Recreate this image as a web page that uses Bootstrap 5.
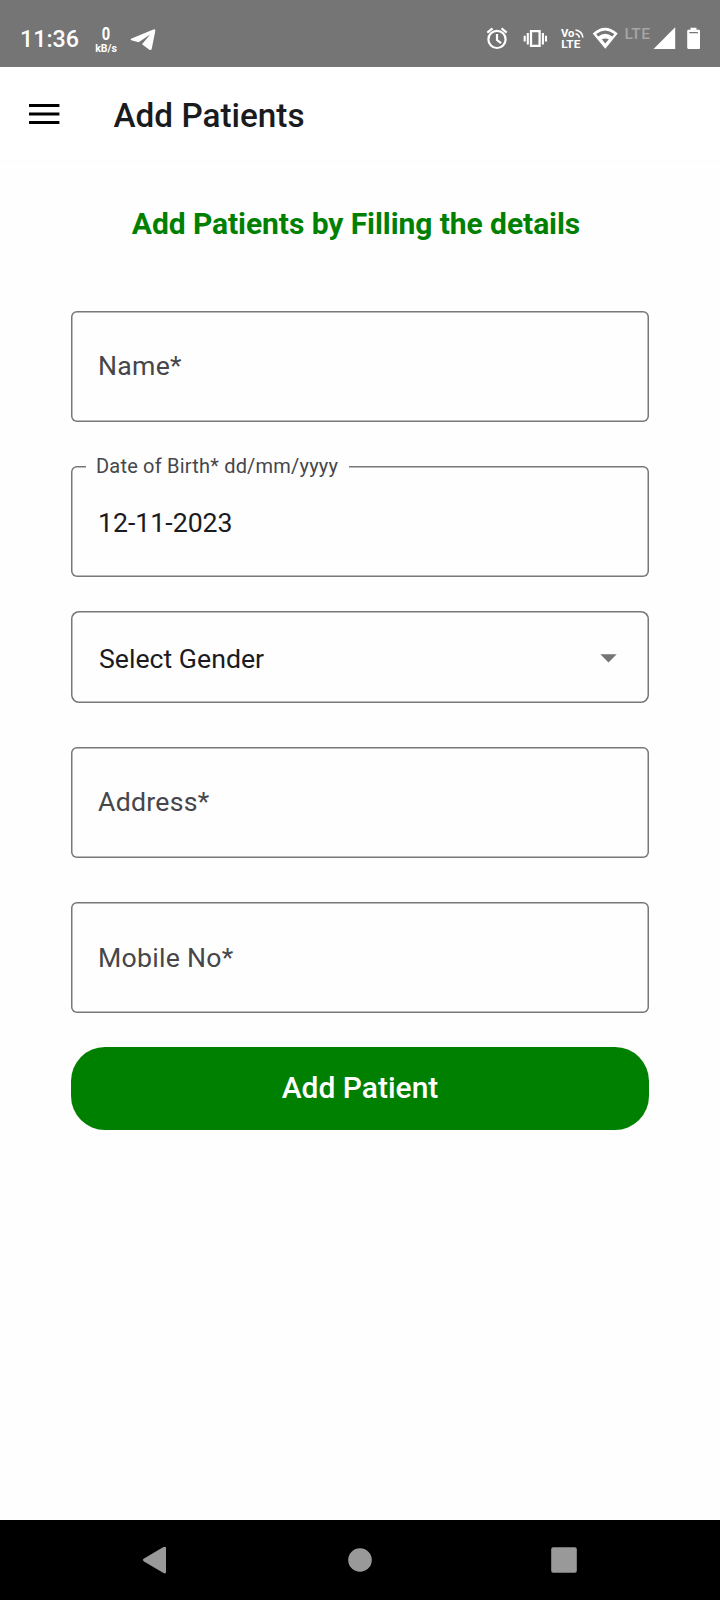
<!DOCTYPE html>
<html lang="en">
<head>
<meta charset="utf-8">
<meta name="viewport" content="width=device-width, initial-scale=1">
<title>Add Patients</title>
<link href="https://cdn.jsdelivr.net/npm/bootstrap@5.3.0/dist/css/bootstrap.min.css" rel="stylesheet">
<style>
  body { font-family: Roboto, "Liberation Sans", sans-serif; background: #fefefe; color: #1b1b1f; height: 1600px; overflow: hidden; }
  svg { display: block; flex: none; }
  svg text { font-family: Roboto, sans-serif; }
  .status-bar { height: 67px; background: #757575; padding: 10px 20px 0 20px; color: #fff; }
  .clock-text { font-size: 23.3px; font-weight: 500; line-height: 28px; width: 74px; }
  .speed-meter { width: 24px; height: 30px; padding-top: 2px; }
  .speed-value { font-size: 17.5px; line-height: 16px; font-weight: 700; transform: scaleX(.84); }
  .speed-unit { font-size: 10.5px; line-height: 11px; font-weight: 700; padding-top: 1px; }
  .app-bar { height: 94px; background: #fff; border-bottom: 1px solid #fcfcfc; padding: 2px 29px 0; gap: 53.5px; }
  .menu-icon { margin-bottom: 2px; }
  .app-title { font-size: 33.3px; font-weight: 500; line-height: 40px; color: #1a1b1e; padding-top: 2px; }
  .form-area { padding: 43px 71px 0; }
  .form-heading { font-size: 30px; font-weight: 700; line-height: 40px; color: green; margin: 0 8px 67px 0; letter-spacing: -.07px; }
  .field-box { height: 111px; border-radius: 6px; box-shadow: inset 0 0 0 1.5px #77777a; padding: 0 27px 2px; font-size: 26.67px; line-height: 32px; margin-bottom: 44px; background: #fefefe; }
  .field-hint { color: #46464b; letter-spacing: .27px; }
  .dob-box { margin-bottom: 34px; padding: 2px 27px 0; }
  .field-label { left: 15px; top: -12px; padding: 0 10px; width: 263px; font-size: 20px; line-height: 24px; color: #46464b; background: #fefefe; letter-spacing: .2px; }
  .picker-box { height: 92px; border-radius: 8px; padding: 4px 32px 0 28px; }
  .picker-box svg { margin-bottom: 2px; }
  .last-box { margin-bottom: 34px; padding-bottom: 0; }
  .btn-submit { height: 83px; width: 578px; border-radius: 34px; background: green; color: #fff; font-size: 30px; font-weight: 500; padding: 0 0 2px; }
  .btn-submit:hover { background: #007000; color: #fff; }
  .system-nav { height: 80px; background: #000; }
</style>
</head>
<body class="d-flex flex-column">
  <header class="status-bar d-flex align-items-center flex-shrink-0">
    <span class="clock-text">11:36</span>
    <div class="speed-meter d-flex flex-column align-items-center text-nowrap">
      <span class="speed-value">0</span>
      <span class="speed-unit">kB/s</span>
    </div>
    <svg class="ms-2" width="34" height="30" viewBox="126 24 34 30" fill="#fff">
      <path d="M131 38.8 153.4 29.5Q155.6 28.8 155.3 31L151.8 48.5Q151.2 51 149 49.6L142 44.2 150.2 34.6 138.6 42.3 131.3 40.2Q130 39.5 131 38.8Z"/>
    </svg>
    <div class="d-flex ms-auto">
      <svg width="24" height="30" viewBox="485 24 24 30" fill="none" stroke="#fff" stroke-width="2.2">
        <circle cx="497" cy="39.4" r="8.6"/>
        <path d="M497 34v6l4 3.2M487.3 32.6l5.2-4.2M506.7 32.6l-5.2-4.2"/>
      </svg>
      <svg width="46" height="30" viewBox="509 24 46 30" fill="none" stroke="#fff">
        <path stroke-width="2.3" d="M531 31.2h8.6v14.6H531z"/>
        <path stroke-width="2.1" d="M527.8 33v11.5M524.7 35.7v5.7M542.9 33v11.5M546 35.7v5.7"/>
      </svg>
      <svg width="34" height="30" viewBox="555 24 34 30" fill="#fff">
        <text x="561" y="37" font-size="11" font-weight="700" textLength="13.5" lengthAdjust="spacingAndGlyphs">Vo</text>
        <text x="561.3" y="48.4" font-size="11.5" font-weight="700" textLength="19" lengthAdjust="spacingAndGlyphs">LTE</text>
        <path d="M575.5 30.1a7.8 7.8 0 0 1 7.4 7.4M575.5 34a4 4 0 0 1 3.8 3.6" fill="none" stroke="#fff" stroke-width="1.6"/>
      </svg>
      <svg width="34" height="30" viewBox="589 24 34 30">
        <path fill="#fff" fill-rule="evenodd" d="M592.7 33.6Q605 22 617.7 33.6L605.3 48.7ZM596.2 34 598.2 36.4Q605.2 31.2 612.3 36.4L614.3 34Q605.2 27 596.2 34ZM601.8 39.2 605.3 43.5 608.8 39.2Q605.3 37.6 601.8 39.2Z"/>
      </svg>
      <svg width="29" height="30" viewBox="623 24 29 30" fill="#a6a6a6">
        <text x="624.4" y="38.6" font-size="15.5" font-weight="500" textLength="25.5" lengthAdjust="spacing">LTE</text>
      </svg>
      <svg width="48" height="30" viewBox="652 24 48 30" fill="#fff">
        <path d="M653.5 49 675.2 27.3V49Z"/>
        <path fill-rule="evenodd" d="M690.5 27.8h6v2h2.6q1.1 0 1.1 1.2V47.6q0 1.4-1.2 1.4H688.4q-1.2 0-1.2-1.4V31q0-1.2 1.1-1.2h2.2ZM689.3 32v1.2h8.6V32Z"/>
      </svg>
    </div>
  </header>

  <nav class="app-bar d-flex align-items-center flex-shrink-0">
    <svg class="menu-icon" width="31" height="24" viewBox="0 0 31 24"><path d="M0 3.5h30.4M0 12h30.4M0 20.5h30.4" stroke="#000" stroke-width="3"/></svg>
    <h1 class="app-title mb-0">Add Patients</h1>
  </nav>

  <main class="form-area flex-grow-1">
    <h2 class="form-heading text-center">Add Patients by Filling the details</h2>
    <div class="field-box d-flex align-items-center"><span class="field-hint">Name*</span></div>
    <div class="field-box dob-box d-flex align-items-center position-relative">
      <span class="field-label position-absolute text-nowrap">Date of Birth* dd/mm/yyyy</span>
      <span>12-11-2023</span>
    </div>
    <div class="field-box picker-box d-flex align-items-center justify-content-between">
      <span>Select Gender</span>
      <svg width="17" height="9" viewBox="0 0 17 9" fill="#757575"><path d="M.3.3h16.4L8.5 8.5Z"/></svg>
    </div>
    <div class="field-box d-flex align-items-center"><span class="field-hint">Address*</span></div>
    <div class="field-box last-box d-flex align-items-center"><span class="field-hint">Mobile No*</span></div>
    <button class="btn btn-submit border-0" type="button">Add Patient</button>
  </main>

  <footer class="system-nav flex-shrink-0 d-flex align-items-center justify-content-center">
    <svg width="720" height="80" viewBox="0 0 720 80" fill="#999">
      <path d="M144 38.6 163 27.2Q166 25.8 166 28V52Q166 54.2 163.5 53L144 41.4Q141.7 40 144 38.6Z"/>
      <circle cx="360" cy="40" r="11.8"/>
      <rect x="551.2" y="27.2" width="25.6" height="25.6" rx="2"/>
    </svg>
  </footer>
<script src="https://cdn.jsdelivr.net/npm/bootstrap@5.3.0/dist/js/bootstrap.bundle.min.js"></script>
</body>
</html>
